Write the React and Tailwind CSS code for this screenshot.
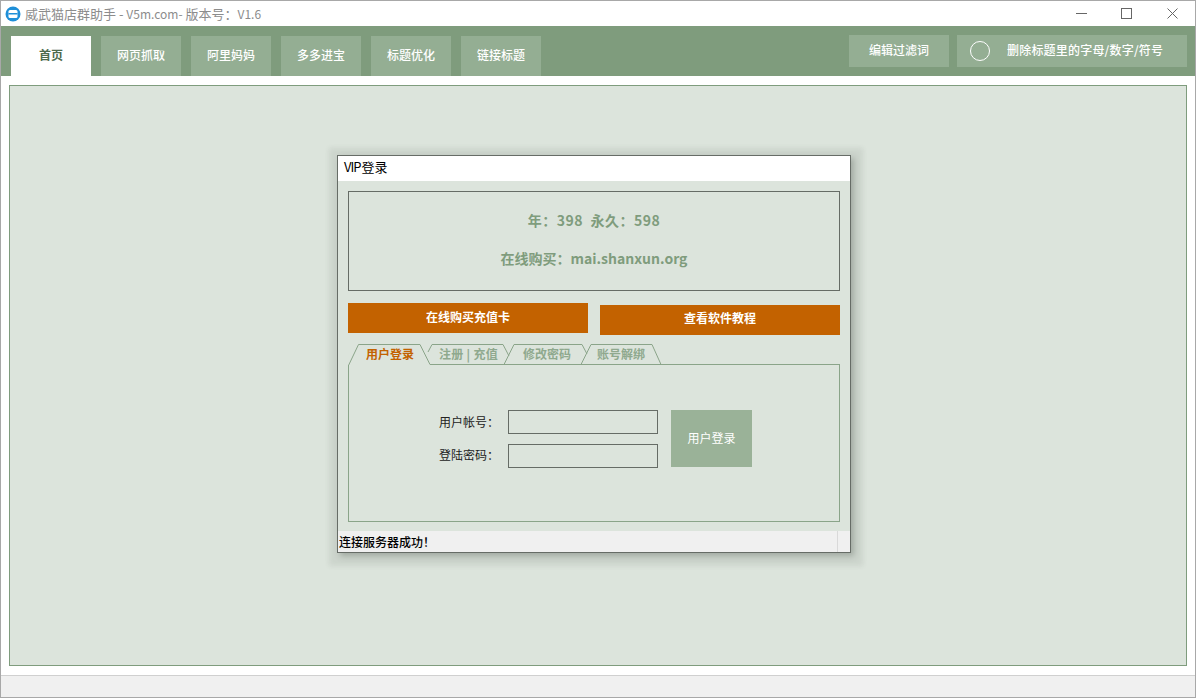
const F = '"Noto Sans CJK SC", sans-serif';

function NavTab({ label, active }) {
  return (
    <div className={active
      ? "w-20 h-10 pb-[2px] flex items-center justify-center bg-white text-[#4d6b4d] text-[12px] font-bold"
      : "w-20 h-10 pb-[2px] flex items-center justify-center bg-[#94ae93] text-white text-[12px] font-medium"}>
      {label}
    </div>
  );
}

function TabShapes() {
  return (
    <svg className="absolute left-0 top-0" width="492" height="22" viewBox="0 0 492 22" fill="none" stroke="#8aa489" strokeWidth="1">
      <path d="M0.5 21.5 L10.5 0.5 H72 L82 20.5 H492" />
      <path d="M84 0.5 L80 8 M84 0.5 H155 L161 12" />
      <path d="M156 20.5 L166 0.5 H234 L239 10" />
      <path d="M233 20.5 L243 0.5 H304 L313 20.5" />
    </svg>
  );
}

export default function App() {
  return (
    <div className="w-[1196px] h-[698px] flex flex-col bg-white border-x border-y border-[#a8a8a8] overflow-hidden" style={{ fontFamily: F }}>
      <div className="h-[25px] shrink-0 flex items-center pl-[4px]">
        <svg width="16" height="16" viewBox="0 0 16 16" className="mr-[4px]">
          <circle cx="8" cy="8" r="7.5" fill="#1f8fd8" />
          <rect x="3.5" y="4" width="9" height="8" rx="1.5" fill="#fff" />
          <rect x="3.5" y="7" width="9" height="1.5" fill="#1f8fd8" />
        </svg>
        <span className="text-[13px] text-[#8c8c8c] leading-none pb-[1px]">威武猫店群助手 - <span className="text-[12px]">V5m.com-</span> 版本号：<span className="text-[12px]">V1.6</span></span>
        <div className="ml-auto flex items-center pr-[17px]">
          <svg width="11" height="11" viewBox="0 0 11 11" fill="none" stroke="#666" className="mr-[34px]"><path d="M0 5.5H11" /></svg>
          <svg width="11" height="11" viewBox="0 0 11 11" fill="none" stroke="#666" className="mr-[35px]"><rect x="0.5" y="0.5" width="10" height="10" /></svg>
          <svg width="11" height="11" viewBox="0 0 11 11" fill="none" stroke="#666"><path d="M0.5 0.5L10.5 10.5M10.5 0.5L0.5 10.5" /></svg>
        </div>
      </div>

      <div className="h-[50px] shrink-0 bg-[#7f9c7d] flex pl-[10px] pr-[8px]">
        <div className="flex gap-[10px] mt-[10px]">
          <NavTab label="首页" active />
          <NavTab label="网页抓取" />
          <NavTab label="阿里妈妈" />
          <NavTab label="多多进宝" />
          <NavTab label="标题优化" />
          <NavTab label="链接标题" />
        </div>
        <div className="ml-auto flex gap-[8px] mt-[9px] h-[32px]">
          <div className="w-[100px] pb-[2px] bg-[#94ae93] text-white text-[12px] font-medium flex items-center justify-center">编辑过滤词</div>
          <div className="w-[230px] bg-[#94ae93] text-white text-[12px] font-medium flex items-center pl-[13px]">
            <span className="w-[20px] h-[20px] rounded-full border border-white mr-[17px] shrink-0" />
            <span className="pb-[2px] tracking-[0.2px]">删除标题里的字母/数字/符号</span>
          </div>
        </div>
      </div>

      <div className="flex-1 px-[8px] pt-[9px] pb-[9px] flex min-h-0">
        <div className="w-[1178px] h-[581px] border border-[#7f9c7d] bg-[#dce4dc] pl-[327px] pt-[69px]">
          <div className="w-[514px] h-[398px] border border-[#666c66] bg-[#dce4dc] flex flex-col shadow-[3px_3px_6px_rgba(60,70,60,0.3),2px_3px_5px_10px_rgba(60,70,60,0.09)]">
            <div className="h-[25px] shrink-0 bg-white flex items-center pl-[6px] pb-[5px] text-[13px] text-black leading-none"><span className="tracking-[-1px] mr-[1px]">VIP</span>登录</div>

            <div className="flex-1 px-[10px] pt-[10px] flex flex-col min-h-0">
              <div className="h-[100px] shrink-0 border border-[#666c66] flex flex-col items-center pt-[18px] gap-[18px] text-[#7f9c7d] text-[14px] font-bold leading-[20px]">
                <div className="tracking-[0.5px]">年：398&nbsp; 永久：598</div>
                <div>在线购买：mai.shanxun.org</div>
              </div>

              <div className="flex justify-between items-start mt-[12px] h-[32px] shrink-0">
                <div className="w-[240px] h-[30px] pb-[2px] bg-[#c36200] text-white text-[12px] font-bold flex items-center justify-center">在线购买充值卡</div>
                <div className="w-[240px] h-[30px] pb-[4px] mt-[2px] bg-[#c36200] text-white text-[12px] font-bold flex items-center justify-center">查看软件教程</div>
              </div>

              <div className="relative h-[22px] mt-[9px] shrink-0 text-[12px] font-bold text-[#8fa98e] leading-none">
                <TabShapes />
                <span className="absolute left-[18px] top-[4px] text-[#c36200]">用户登录</span>
                <span className="absolute left-[91px] top-[4px] tracking-[0.3px]">注册 | 充值</span>
                <span className="absolute left-[175px] top-[4px]">修改密码</span>
                <span className="absolute left-[249px] top-[4px]">账号解绑</span>
              </div>

              <div className="h-[157px] -mt-[1px] shrink-0 border border-t-0 border-[#8aa489] flex items-start pl-[90px] pt-[45px]">
                <div className="flex flex-col gap-[10px] text-[12px] text-[#222]">
                  <div className="flex items-center h-[24px]">
                    <span className="w-[69px] pb-[1px]">用户帐号：</span>
                    <div className="w-[150px] h-[24px] border border-[#666c66]" />
                  </div>
                  <div className="flex items-center h-[24px]">
                    <span className="w-[69px] pb-[2px]">登陆密码：</span>
                    <div className="w-[150px] h-[24px] border border-[#666c66]" />
                  </div>
                </div>
                <div className="ml-[13px] w-[81px] h-[57px] pb-[1px] bg-[#9ab298] text-white text-[12px] flex items-center justify-center">用户登录</div>
              </div>
            </div>

            <div className="h-[21px] shrink-0 bg-[#f0f0f0] flex items-center text-[12px] text-black leading-none pl-[1px] relative font-medium">
              连接服务器成功！
              <span className="absolute right-[12px] top-0 bottom-0 border-l border-[#d9d9d9]" />
            </div>
          </div>
        </div>
      </div>

      <div className="h-[22px] shrink-0 bg-[#f0f0f0] border-t border-[#d0d0d0]" />
    </div>
  );
}
